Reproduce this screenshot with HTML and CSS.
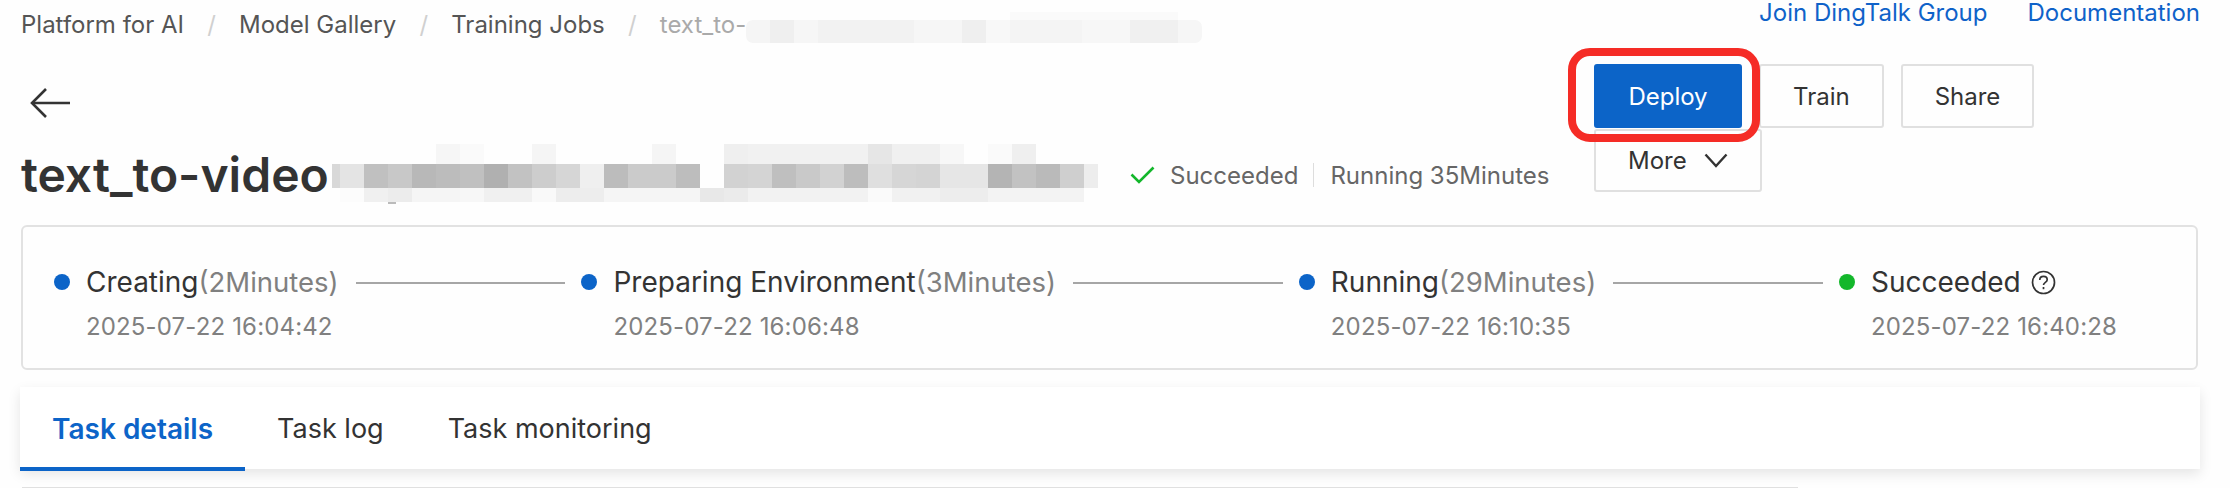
FILE: index.html
```html
<!DOCTYPE html>
<html lang="en">
<head>
  <meta charset="UTF-8">
  <meta name="viewport" content="width=device-width, initial-scale=1.0">
  <title>Training Job</title>
  <link rel="stylesheet" href="styles.css">
</head>
<body>
  <div class="page">
    <!-- Breadcrumb and links -->
    <div class="top-bar">
      <div class="breadcrumb">
        <span class="crumb">Platform for AI</span>
        <span class="crumb-sep">/</span>
        <span class="crumb">Model Gallery</span>
        <span class="crumb-sep">/</span>
        <span class="crumb">Training Jobs</span>
        <span class="crumb-sep">/</span>
        <span class="crumb crumb-current">text_to-</span>
        <svg class="crumb-blur" width="456" height="31" shape-rendering="crispEdges">
          <clipPath id="crumbClip">
            <rect x="0" y="8" width="456" height="23" rx="7"></rect>
            <rect x="264" y="0" width="168" height="10"></rect>
          </clipPath>
          <g clip-path="url(#crumbClip)">
            <rect x="264" y="0" width="168" height="8" fill="#fafafa"></rect>
            <rect x="0" y="8" width="24" height="23" fill="#f5f5f5"></rect>
            <rect x="24" y="8" width="24" height="23" fill="#efefef"></rect>
            <rect x="48" y="8" width="24" height="23" fill="#f6f6f6"></rect>
            <rect x="72" y="8" width="96" height="23" fill="#f2f2f2"></rect>
            <rect x="168" y="8" width="48" height="23" fill="#f6f6f6"></rect>
            <rect x="216" y="8" width="24" height="23" fill="#efefef"></rect>
            <rect x="240" y="8" width="24" height="23" fill="#f8f8f8"></rect>
            <rect x="264" y="8" width="72" height="23" fill="#f4f4f4"></rect>
            <rect x="336" y="8" width="48" height="23" fill="#f7f7f7"></rect>
            <rect x="384" y="8" width="48" height="23" fill="#f0f0f0"></rect>
            <rect x="432" y="8" width="24" height="23" fill="#f6f6f6"></rect>
          </g>
        </svg>
      </div>
      <div class="top-links">
        <a class="top-link">Join DingTalk Group</a>
        <a class="top-link">Documentation</a>
      </div>
    </div>

    <!-- Title and actions -->
    <div class="head">
      <div class="head-left">
        <svg class="back-icon" width="42" height="32" viewBox="0 0 42 32" fill="none" stroke="#333" stroke-width="2.6">
          <path d="M42 16H4"></path>
          <path d="M18 2L4 16l14 14"></path>
        </svg>
        <div class="title-row">
          <h1 class="title">text_to-video</h1>
          <svg class="title-blur" width="766" height="60" shape-rendering="crispEdges">
            <rect x="104" y="0" width="24" height="20" fill="#f6f6f6"></rect>
            <rect x="128" y="0" width="24" height="20" fill="#fafafa"></rect>
            <rect x="200" y="0" width="24" height="20" fill="#f5f5f5"></rect>
            <rect x="320" y="0" width="24" height="20" fill="#f5f5f5"></rect>
            <rect x="392" y="0" width="24" height="20" fill="#efefef"></rect>
            <rect x="416" y="0" width="120" height="20" fill="#f1f1f1"></rect>
            <rect x="536" y="0" width="24" height="20" fill="#e6e6e6"></rect>
            <rect x="560" y="0" width="48" height="20" fill="#f0f0f0"></rect>
            <rect x="608" y="0" width="24" height="20" fill="#f7f7f7"></rect>
            <rect x="656" y="0" width="24" height="20" fill="#fafafa"></rect>
            <rect x="680" y="0" width="24" height="20" fill="#efefef"></rect>

            <rect x="0" y="20" width="8" height="24" fill="#d8d8d8"></rect>
            <rect x="8" y="20" width="24" height="24" fill="#e4e4e4"></rect>
            <rect x="32" y="20" width="24" height="24" fill="#c0c0c0"></rect>
            <rect x="56" y="20" width="24" height="24" fill="#c8c8c8"></rect>
            <rect x="80" y="20" width="24" height="24" fill="#b8b8b8"></rect>
            <rect x="104" y="20" width="24" height="24" fill="#bcbcbc"></rect>
            <rect x="128" y="20" width="24" height="24" fill="#c0c0c0"></rect>
            <rect x="152" y="20" width="24" height="24" fill="#b0b0b0"></rect>
            <rect x="176" y="20" width="24" height="24" fill="#c2c2c2"></rect>
            <rect x="200" y="20" width="24" height="24" fill="#cdcdcd"></rect>
            <rect x="224" y="20" width="24" height="24" fill="#d6d6d6"></rect>
            <rect x="248" y="20" width="24" height="24" fill="#efefef"></rect>
            <rect x="272" y="20" width="24" height="24" fill="#bcbcbc"></rect>
            <rect x="296" y="20" width="48" height="24" fill="#cbcbcb"></rect>
            <rect x="344" y="20" width="24" height="24" fill="#bdbdbd"></rect>
            <rect x="392" y="20" width="24" height="24" fill="#d2d2d2"></rect>
            <rect x="416" y="20" width="24" height="24" fill="#d4d4d4"></rect>
            <rect x="440" y="20" width="24" height="24" fill="#bfbfbf"></rect>
            <rect x="464" y="20" width="24" height="24" fill="#c9c9c9"></rect>
            <rect x="488" y="20" width="24" height="24" fill="#d2d2d2"></rect>
            <rect x="512" y="20" width="24" height="24" fill="#bdbdbd"></rect>
            <rect x="536" y="20" width="24" height="24" fill="#dfdfdf"></rect>
            <rect x="560" y="20" width="24" height="24" fill="#d6d6d6"></rect>
            <rect x="584" y="20" width="24" height="24" fill="#d4d4d4"></rect>
            <rect x="608" y="20" width="48" height="24" fill="#e6e6e6"></rect>
            <rect x="656" y="20" width="24" height="24" fill="#b4b4b4"></rect>
            <rect x="680" y="20" width="24" height="24" fill="#c2c2c2"></rect>
            <rect x="704" y="20" width="24" height="24" fill="#bababa"></rect>
            <rect x="728" y="20" width="24" height="24" fill="#cfcfcf"></rect>
            <rect x="752" y="20" width="14" height="24" fill="#ededed"></rect>

            <rect x="8" y="44" width="24" height="14" fill="#fcfcfc"></rect>
            <rect x="32" y="44" width="24" height="14" fill="#f0f0f0"></rect>
            <rect x="56" y="44" width="24" height="14" fill="#ececec"></rect>
            <rect x="80" y="44" width="48" height="14" fill="#f5f5f5"></rect>
            <rect x="128" y="44" width="24" height="14" fill="#f7f7f7"></rect>
            <rect x="152" y="44" width="48" height="14" fill="#f0f0f0"></rect>
            <rect x="200" y="44" width="24" height="14" fill="#f9f9f9"></rect>
            <rect x="224" y="44" width="48" height="14" fill="#ededed"></rect>
            <rect x="272" y="44" width="96" height="14" fill="#f5f5f5"></rect>
            <rect x="368" y="44" width="24" height="14" fill="#e8e8e8"></rect>
            <rect x="392" y="44" width="24" height="14" fill="#ebebeb"></rect>
            <rect x="416" y="44" width="120" height="14" fill="#f2f2f2"></rect>
            <rect x="536" y="44" width="24" height="14" fill="#fafafa"></rect>
            <rect x="560" y="44" width="48" height="14" fill="#f1f1f1"></rect>
            <rect x="608" y="44" width="48" height="14" fill="#ededed"></rect>
            <rect x="656" y="44" width="96" height="14" fill="#f3f3f3"></rect>
            <rect x="56" y="58" width="8" height="2" fill="#bbbbbb"></rect>
          </svg>
          <div class="status">
            <svg class="status-check" width="25" height="18" viewBox="0 0 25 18" fill="none" stroke="#13b72b" stroke-width="2.6">
              <path d="M1.5 8.5l7.5 7.5L23.5 1.5"></path>
            </svg>
            <span class="status-text">Succeeded</span>
            <span class="status-sep"></span>
            <span class="status-text">Running 35Minutes</span>
          </div>
        </div>
      </div>
      <div class="actions">
        <button class="btn btn-primary">
          Deploy
          <span class="mark"></span>
        </button>
        <button class="btn">Train</button>
        <button class="btn">Share</button>
        <button class="btn btn-more">
          More
          <svg width="24" height="15" viewBox="0 0 24 15" fill="none" stroke="#333" stroke-width="2.4">
            <path d="M1.5 1.5L12 13 22.5 1.5"></path>
          </svg>
        </button>
      </div>
    </div>

    <!-- Progress steps -->
    <div class="steps-card">
      <div class="step">
        <div class="step-name"><span class="dot"></span>Creating<span class="step-time">(2Minutes)</span></div>
        <div class="step-date">2025-07-22 16:04:42</div>
      </div>
      <div class="step-line"></div>
      <div class="step">
        <div class="step-name"><span class="dot"></span>Preparing Environment<span class="step-time">(3Minutes)</span></div>
        <div class="step-date">2025-07-22 16:06:48</div>
      </div>
      <div class="step-line"></div>
      <div class="step">
        <div class="step-name"><span class="dot"></span>Running<span class="step-time">(29Minutes)</span></div>
        <div class="step-date">2025-07-22 16:10:35</div>
      </div>
      <div class="step-line"></div>
      <div class="step">
        <div class="step-name">
          <span class="dot dot-done"></span>Succeeded
          <svg class="help-icon" width="25" height="25" viewBox="0 0 25 25" fill="none" stroke="#333" stroke-width="1.7">
            <circle cx="12.5" cy="12.5" r="11"></circle>
            <path d="M8.8 10c0-2.3 1.6-3.6 3.7-3.6s3.7 1.3 3.7 3.3c0 2.6-3.7 2.7-3.7 5.4"></path>
            <path d="M12.5 17v2.2"></path>
          </svg>
        </div>
        <div class="step-date">2025-07-22 16:40:28</div>
      </div>
    </div>

    <!-- Tabs -->
    <div class="tabs">
      <div class="tab active">Task details</div>
      <div class="tab">Task log</div>
      <div class="tab">Task monitoring</div>
    </div>
    <div class="content-edge"></div>
  </div>
</body>
</html>
```

FILE: styles.css
```css
body {
  font-family: Inter, "Noto Sans", sans-serif;
  margin: 0;
  background-color: #fefefe;
  color: #333;
  overflow: hidden;
}
.page {
  padding: 0 30px 0 21px;
}

/* Top bar */
.top-bar {
  display: flex;
  justify-content: space-between;
  align-items: flex-start;
  height: 64px;
}
.breadcrumb {
  display: flex;
  align-items: flex-start;
  padding-top: 12px;
  font-size: 24px;
  line-height: 26px;
}
.crumb {
  color: #555;
}
.crumb-current {
  color: #aaa;
}
.crumb-sep {
  width: 55px;
  text-align: center;
  color: #d0d0d0;
}
.top-links {
  display: flex;
  gap: 40px;
  font-size: 24px;
  line-height: 26px;
}
.top-link {
  color: #0f62c9;
}

/* Head */
.head {
  display: flex;
  justify-content: space-between;
  padding-right: 160px;
  height: 140px;
}
.head-left {
  padding-top: 23px;
}
.back-icon {
  display: block;
  margin-left: 7px;
}
.title-row {
  display: flex;
  align-items: center;
  margin-top: 25px;
  height: 60px;
}
.title {
  margin: 0;
  font-size: 48px;
  font-weight: 600;
  width: 311px;
  white-space: nowrap;
}
.title-blur {
  display: block;
}
.status {
  display: flex;
  align-items: center;
  margin-left: 32px;
  padding-top: 2px;
  font-size: 24px;
  color: #666;
}
.status-check {
  margin-right: 15px;
}
.status-sep {
  width: 1px;
  height: 24px;
  margin: 0 16px 0 15px;
  background: #ddd;
}

/* Buttons */
.actions {
  display: flex;
  flex-wrap: wrap;
  align-content: flex-start;
  gap: 1px 17px;
  width: 446px;
}
.btn {
  height: 64px;
  padding: 0 32px;
  background: #fefefe;
  border: 2px solid #e0e0e0;
  border-radius: 3px;
  font-family: inherit;
  font-size: 24px;
  color: #333;
}
.btn-primary {
  position: relative;
  width: 148px;
  border-color: #0c64c8;
  background: #0c64c8;
  color: white;
}
.mark {
  position: absolute;
  top: -18px;
  left: -28px;
  right: -20px;
  bottom: -16px;
  border: 8px solid #f52c26;
  border-radius: 22px;
  z-index: 1;
}
.btn-more {
  display: flex;
  align-items: center;
  gap: 17px;
  height: 63px;
}

/* Steps */
.steps-card {
  display: flex;
  align-items: flex-start;
  box-sizing: border-box;
  width: 2177px;
  height: 145px;
  margin-top: 21px;
  padding: 38px 79px 0 31px;
  border: 2px solid #e2e2e2;
  border-radius: 6px;
}
.step {
  flex: none;
}
.step-name {
  display: flex;
  align-items: center;
  font-size: 28px;
  line-height: 34px;
}
.step-time {
  font-size: 27.5px;
  color: #808080;
}
.dot {
  width: 16px;
  height: 16px;
  margin-right: 16px;
  border-radius: 50%;
  background: #0c64c8;
}
.dot-done {
  background: #13b72b;
}
.help-icon {
  margin-left: 10px;
}
.step-date {
  margin-top: 13px;
  margin-left: 32px;
  font-size: 24px;
  line-height: 30px;
  letter-spacing: 0.15px;
  color: #808080;
}
.step-line {
  flex: 1;
  height: 2px;
  margin: 17px 16px 0 17px;
  background: #a6a6a6;
}

/* Tabs */
.tabs {
  display: flex;
  box-sizing: border-box;
  width: 2180px;
  height: 82px;
  margin: 17px 0 0 -1px;
  background: white;
  box-shadow: 0 5px 12px rgba(0, 0, 0, 0.1);
}
.tab {
  padding: 0 32px;
  font-size: 27px;
  line-height: 84px;
  color: #333;
}
.tab.active {
  color: #0c64c8;
  font-size: 28px;
  font-weight: 600;
  border-bottom: 4px solid #0c64c8;
  height: 84px;
  box-sizing: border-box;
}
.content-edge {
  width: 1776px;
  height: 1px;
  margin: 18px 0 0 1px;
  background: #e0e0e0;
}
```
